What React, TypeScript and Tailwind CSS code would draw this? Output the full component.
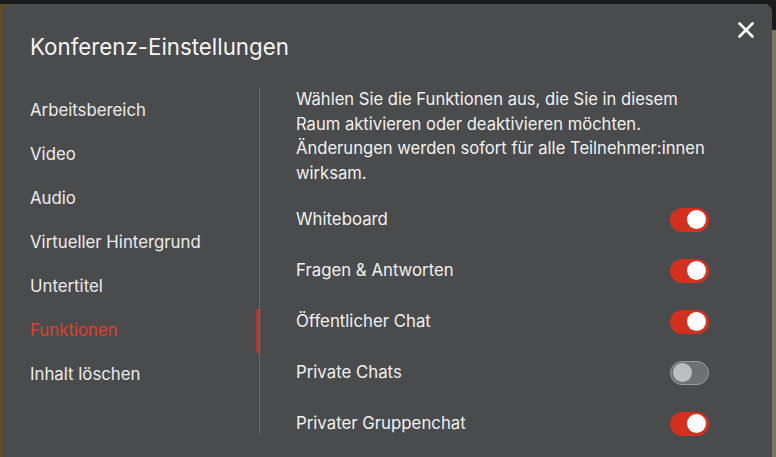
const navItems = [
  "Arbeitsbereich",
  "Video",
  "Audio",
  "Virtueller Hintergrund",
  "Untertitel",
  "Funktionen",
  "Inhalt löschen",
];

const features = [
  { label: "Whiteboard", on: true },
  { label: "Fragen & Antworten", on: true },
  { label: "Öffentlicher Chat", on: true },
  { label: "Private Chats", on: false },
  { label: "Privater Gruppenchat", on: true },
];

function Toggle({ on }: { on: boolean }) {
  return on ? (
    <div className="flex h-[24px] w-[39px] items-center justify-end rounded-full bg-[#d3311f] px-[3px]">
      <div className="h-[19px] w-[19px] rounded-full bg-white" />
    </div>
  ) : (
    <div className="flex h-[24px] w-[39px] items-center justify-start rounded-full border border-[#9a9b9d] bg-[#6f7072] px-[2px]">
      <div className="h-[19px] w-[19px] rounded-full bg-[#bdbebf]" />
    </div>
  );
}

export default function App() {
  return (
    <div className="relative h-[457px] w-[776px] overflow-hidden bg-[#5f4b25] font-['Inter','Liberation_Sans',sans-serif]">
      <div className="absolute left-0 right-0 top-0 h-[4px] bg-[#1b1b1c]" />
      <div className="absolute right-0 top-0 h-[30px] w-[8px] bg-[#1b1b1c]" />
      <div className="absolute bottom-0 right-0 top-[30px] w-[5px] bg-[#7a7462]" />

      <div className="absolute bottom-[-10px] left-[3px] top-[4px] flex w-[769px] flex-col rounded-[8px] bg-[#4a4b4d] text-[#f1f1f1]">
        <div className="flex items-start justify-between pl-[27px] pr-[14px] pt-[29px]">
          <h1 className="text-[22.3px] leading-[28px] text-[#f4f4f4]">Konferenz-Einstellungen</h1>
          <button className="mt-[-15px] flex h-[24px] w-[24px] items-center justify-center">
            <svg width="16" height="16" viewBox="0 0 16 16">
              <path d="M1.5 1.5L14.5 14.5M14.5 1.5L1.5 14.5" stroke="#ffffff" strokeWidth="2.6" strokeLinecap="round" />
            </svg>
          </button>
        </div>

        <div className="mt-[26px] flex">
          <nav className="flex w-[256px] flex-col pt-[2px]">
            {navItems.map((item) => {
              const active = item === "Funktionen";
              return (
                <div key={item} className="flex h-[44px] items-center justify-between pl-[27px]">
                  <span className={active ? "text-[16.8px] text-[#e0402f]" : "text-[16.8px] text-[#ececec]"}>
                    {item}
                  </span>
                  {active && <div className="h-[44px] w-[3px] bg-[#a83a2e]" />}
                </div>
              );
            })}
          </nav>

          <div className="h-[347px] w-px bg-[#6a6b6d]" />

          <div className="flex flex-1 flex-col pl-[36px] pr-[63px]">
            <p className="max-w-[410px] text-[16.6px] leading-[24.5px] text-[#f1f1f1]">
              Wählen Sie die Funktionen aus, die Sie in diesem Raum aktivieren oder deaktivieren möchten.
              Änderungen werden sofort für alle Teilnehmer:innen wirksam.
            </p>
            <div className="mt-[9px] flex flex-col">
              {features.map((f) => (
                <div key={f.label} className="flex h-[51px] items-center justify-between">
                  <span className="text-[16.8px] text-[#f1f1f1]">{f.label}</span>
                  <Toggle on={f.on} />
                </div>
              ))}
            </div>
          </div>
        </div>
      </div>
    </div>
  );
}
